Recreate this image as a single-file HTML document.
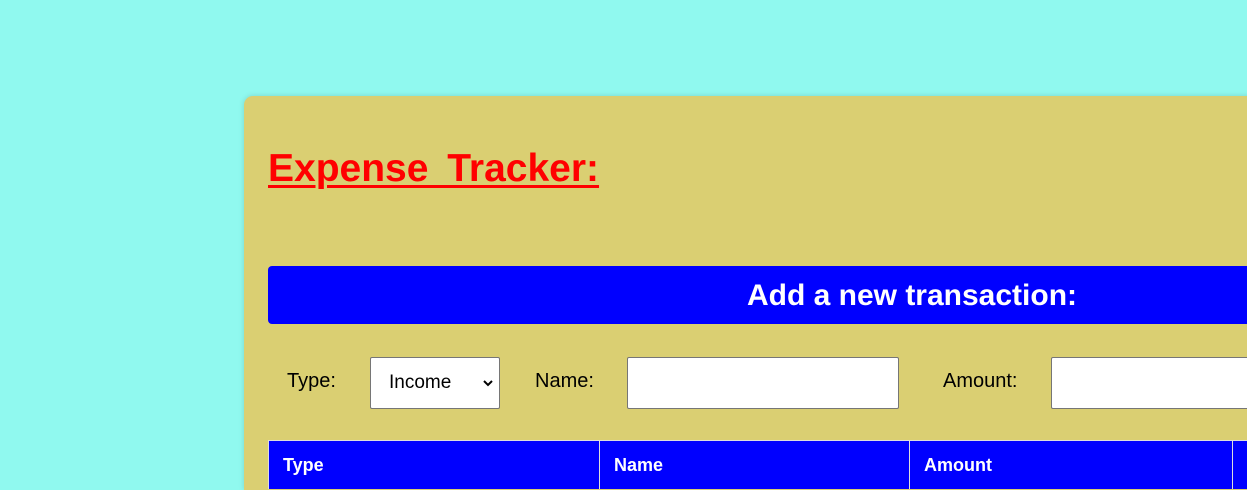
<!DOCTYPE html>
<html style="height:490px;overflow:hidden"><head><style>
body{margin:0;width:1247px;height:490px;overflow:hidden;background:#90f9ef;font-family:"Liberation Sans",Arial,sans-serif;position:relative}
.card{position:absolute;left:244px;top:96px;width:1400px;height:394px;background:#dacf72;border-radius:9px 0 0 0;box-shadow:0 0 6px rgba(0,0,0,.15)}
h1{position:absolute;left:268px;top:147px;margin:0;font-size:39px;word-spacing:8px;font-weight:bold;color:#f00;text-decoration:underline;text-decoration-thickness:3px;text-underline-offset:4px}
.bar{position:absolute;left:268px;top:266px;width:1288px;height:58px;background:#00f;border-radius:4px;color:#fff;font-weight:bold;font-size:30px;text-align:center;line-height:60px}
.lbl{position:absolute;top:370px;font-size:20px;color:#000}
.box{position:absolute;top:357px;height:50px;background:#fff;border:1px solid #767676;border-radius:2px}
table{position:absolute;left:268px;top:440px;border-collapse:collapse;table-layout:fixed;width:1020px}
th{background:#00f;color:#fff;font-size:18px;text-align:left;height:48px;padding:0 0 0 14px;border:1px solid #ddd;border-bottom:none}
</style></head><body>
<div class="card"></div>
<h1>Expense Tracker:</h1>
<div class="bar">Add a new transaction:</div>
<div class="lbl" style="left:287px">Type:</div>
<div class="box" style="left:370px;width:128px"><span style="position:absolute;left:18px;top:14px;font-size:19px">Income</span>
<svg style="position:absolute;right:5px;top:20px" width="12" height="10" viewBox="0 0 12 10"><path d="M2 3l4 4 4-4" fill="none" stroke="#000" stroke-width="2"/></svg></div>
<div class="lbl" style="left:535px">Name:</div>
<div class="box" style="left:627px;width:270px"></div>
<div class="lbl" style="left:943px">Amount:</div>
<div class="box" style="left:1051px;width:250px"></div>
<table><tr><th style="width:316px">Type</th><th style="width:295px">Name</th><th style="width:308px">Amount</th><th></th></tr></table>
</body></html>
